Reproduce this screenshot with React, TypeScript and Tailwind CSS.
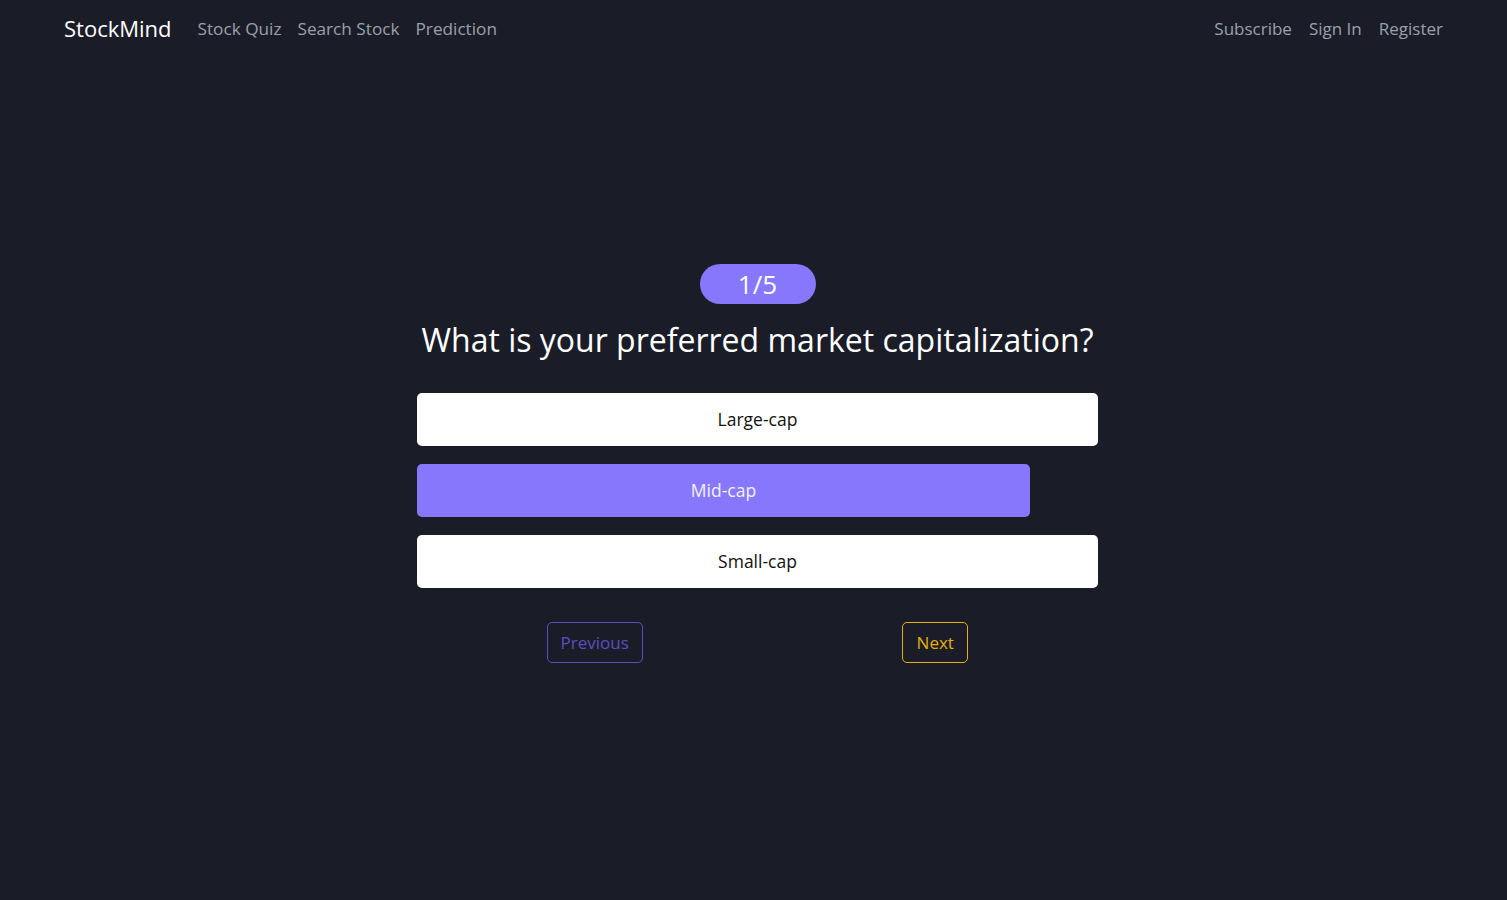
import React, { useState } from "react";

const options = ["Large-cap", "Mid-cap", "Small-cap"];

export default function App() {
  const [selected, setSelected] = useState(1);
  return (
    <div
      className="min-h-screen w-full bg-[#1a1d28] text-white"
      style={{ fontFamily: '"Open Sans", "Noto Sans", sans-serif' }}
    >
      <nav className="flex h-[57px] items-center justify-between px-[64px]">
        <div className="flex items-center">
          <span className="mr-[26px] text-[22px] text-white">StockMind</span>
          <div className="flex items-center gap-[16px] text-[17.2px] text-[#9aa0a9]">
            <a>Stock Quiz</a>
            <a>Search Stock</a>
            <a>Prediction</a>
          </div>
        </div>
        <div className="flex items-center gap-[17px] text-[17px] text-[#9aa0a9]">
          <a>Subscribe</a>
          <a>Sign In</a>
          <a>Register</a>
        </div>
      </nav>

      <main className="flex flex-col items-center pl-[8px] pt-[207px]">
        <div className="flex h-[40px] w-[116px] items-center justify-center rounded-full bg-[#8677fd] text-[26px] text-white">
          1/5
        </div>
        <h1 className="mt-[14px] text-[32px] leading-[44px] text-white">
          What is your preferred market capitalization?
        </h1>
        <div className="mt-[31px] flex w-[681px] flex-col gap-[18px]">
          {options.map((o, i) => (
            <button
              key={o}
              onClick={() => setSelected(i)}
              className={
                i === selected
                  ? "h-[53px] w-[90%] rounded-[5px] bg-[#8677fd] text-[17.5px] text-[#f3f1ff]"
                  : "h-[53px] w-full rounded-[5px] bg-white text-[17.5px] text-[#111]"
              }
            >
              {o}
            </button>
          ))}
        </div>
        <div className="mt-[34px] flex w-[681px] justify-around">
          <button className="h-[41px] w-[96px] rounded-[5px] border border-[#5a4fbf] text-[17px] text-[#5a4fbf]">
            Previous
          </button>
          <button className="h-[41px] w-[66px] rounded-[5px] border border-[#e6ae08] text-[17px] text-[#e6ae08]">
            Next
          </button>
        </div>
      </main>
    </div>
  );
}
